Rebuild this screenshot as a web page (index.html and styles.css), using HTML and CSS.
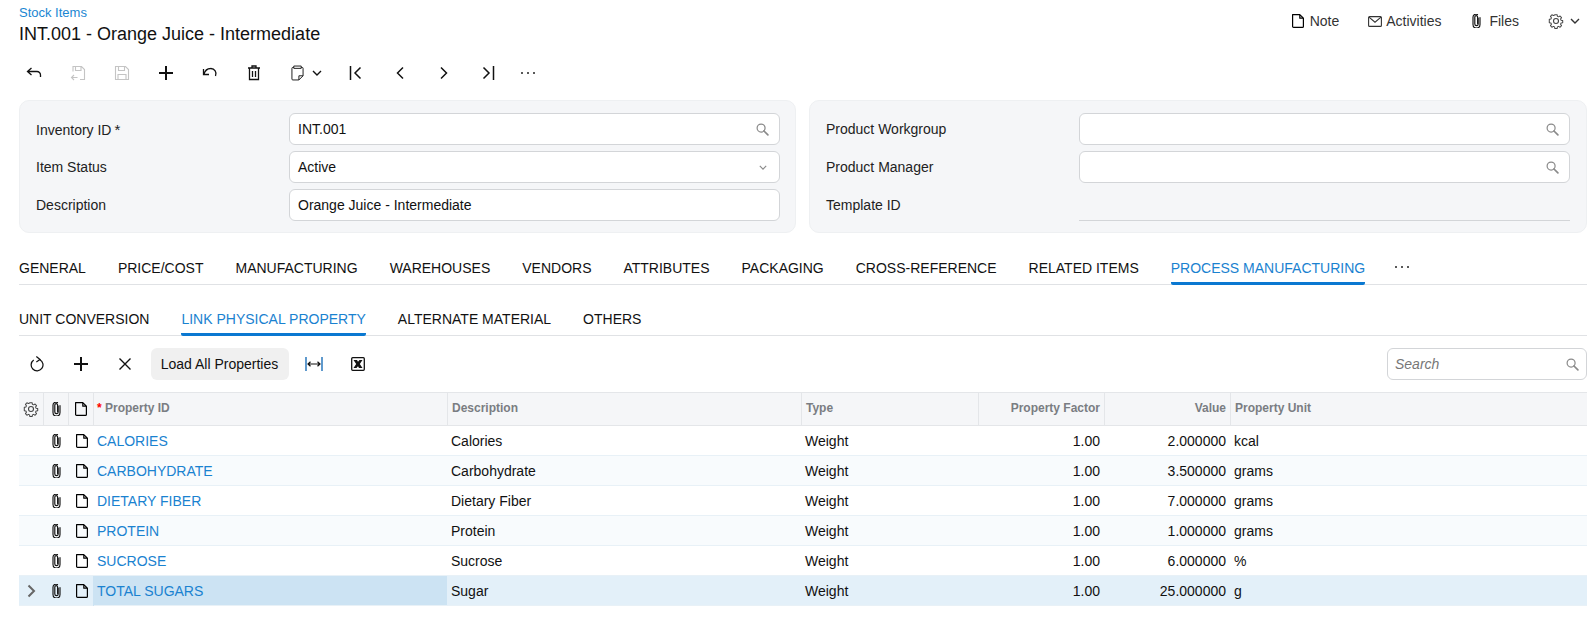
FILE: index.html
```html
<!DOCTYPE html>
<html lang="en">
<head>
    <meta charset="UTF-8">
    <meta name="viewport" content="width=device-width, initial-scale=1.0">
    <title>Stock Items</title>
    <link rel="stylesheet" href="styles.css">
</head>
<body>
    <svg class="sprite" aria-hidden="true">
        <symbol id="i-file" viewBox="0 0 12 14"><path d="M.6.6h7.2l3.6 3.6v8.2a1 1 0 0 1-1 1H1.600a1 1 0 0 1-1-1V.6zM7.800.6v3.600h3.600" fill="none" stroke="currentColor" stroke-width="1.200" stroke-linejoin="round"/></symbol>
        <symbol id="i-clip" viewBox="0 0 9 14"><path d="M6.200 4v6a1.700 1.700 0 0 1-3.400 0V3a1.400 1.400 0 0 1 2.800 0v6.500M8 3.500v7a3.500 3.500 0 0 1-7 0V3a3 3 0 0 1 4.500-2.500" fill="none" stroke="currentColor" stroke-width="1.150" stroke-linecap="round"/></symbol>
        <symbol id="i-gear" viewBox="0 0 16 16"><path d="M6.700 1h2.600l.4 2 1.300.6 1.800-1 1.700 1.900-1.100 1.700.5 1.300 2 .5v2.400l-2 .5-.5 1.300 1.100 1.700-1.700 1.900-1.800-1-1.300.6-.4 2H6.700l-.4-2-1.300-.6-1.800 1-1.700-1.900 1.100-1.700-.5-1.300-2-.5V6.500l2-.5.5-1.300-1.100-1.700 1.700-1.900 1.800 1 1.300-.6z" transform="translate(1.200 .8) scale(.85)" fill="none" stroke="currentColor" stroke-width="1.200" stroke-linejoin="round"/><circle cx="8" cy="8" r="2.500" fill="none" stroke="currentColor" stroke-width="1.100"/></symbol>
        <symbol id="i-search" viewBox="0 0 14 14"><circle cx="5.500" cy="5.500" r="4.300" fill="none" stroke="currentColor" stroke-width="1.300"/><path d="M8.600 8.600l4.200 4.200" stroke="currentColor" stroke-width="1.800" stroke-linecap="round"/></symbol>
        <symbol id="i-plus" viewBox="0 0 16 16"><path d="M8 1v14M1 8h14" stroke="currentColor" stroke-width="2"/></symbol>
        <symbol id="i-chev" viewBox="0 0 10 6"><path d="M1 1l4 4 4-4" fill="none" stroke="currentColor" stroke-width="1.400"/></symbol>
    </svg>

    <div class="page">
        <header class="top">
            <div>
                <a href="#" class="crumb">Stock Items</a>
                <h1>INT.001 - Orange Juice - Intermediate</h1>
            </div>
            <div class="top-links">
                <a href="#" class="top-link link-note"><svg class="ic-file"><use href="#i-file"/></svg>Note</a>
                <a href="#" class="top-link link-act">
                    <svg class="ic-mail" viewBox="0 0 14 11"><rect x=".6" y=".6" width="12.800" height="9.800" rx="1" fill="none" stroke="currentColor" stroke-width="1.100"/><path d="M1 1.200l6 5 6-5" fill="none" stroke="currentColor" stroke-width="1.100"/></svg>Activities</a>
                <a href="#" class="top-link link-files"><svg class="ic-clip"><use href="#i-clip"/></svg>Files</a>
                <a href="#" class="top-link link-gear"><svg class="ic-gear"><use href="#i-gear"/></svg><svg class="ic-chev"><use href="#i-chev"/></svg></a>
            </div>
        </header>

        <div class="toolbar">
            <button class="tool"><svg viewBox="0 0 16 12" class="ic16"><path d="M5.500 1L1.500 4.500l4 3.500M1.500 4.500h9.500a3.500 3.500 0 0 1 3.500 3.500v2" fill="none" stroke="currentColor" stroke-width="1.300"/></svg></button>
            <button class="tool off"><svg viewBox="0 0 16 16" class="ic16"><path d="M3 6.500V1.500h8.500l3 3v10H10M5.500 1.500v4h5.500v-4M7.500 12.500H1.500M4 10l-2.500 2.500L4 15" fill="none" stroke="currentColor" stroke-width="1.100"/></svg></button>
            <button class="tool off"><svg viewBox="0 0 16 16" class="ic16"><path d="M1.500 1.500h10l3 3v10h-13zM4.500 1.500v4h6v-4M4 14.500v-5h8v5" fill="none" stroke="currentColor" stroke-width="1.100"/></svg></button>
            <button class="tool"><svg class="ic16"><use href="#i-plus"/></svg></button>
            <button class="tool"><svg viewBox="0 0 16 14" class="ic16"><path d="M1.500 3v5.500h5.500M1.800 8.500C3 4.500 5.500 2.500 8.500 2.500a5.200 5.200 0 0 1 5 7.500" fill="none" stroke="currentColor" stroke-width="1.300"/></svg></button>
            <button class="tool"><svg viewBox="0 0 14 16" class="ic16"><path d="M1 3h12M5 3V1h4v2M2.500 3v11.500h9V3M5.500 6v6M8.500 6v6" fill="none" stroke="currentColor" stroke-width="1.300"/></svg></button>
            <button class="tool tool-copy">
                <svg viewBox="0 0 14 17" class="ic-copy"><path d="M3 2.500H2a1 1 0 0 0-1 1v11.500a1 1 0 0 0 1 1h6.500l4.500-4.500V3.500a1 1 0 0 0-1-1h-1M3 1h8v2.500H3zM8.500 16v-4.500H13" fill="none" stroke="currentColor" stroke-width="1"/></svg>
                <svg class="ic-chev"><use href="#i-chev"/></svg>
            </button>
            <button class="tool"><svg viewBox="0 0 14 14" class="ic14"><path d="M1.500 0v14M11.500 1.500L6 7l5.500 5.500" fill="none" stroke="currentColor" stroke-width="1.500"/></svg></button>
            <button class="tool"><svg viewBox="0 0 14 14" class="ic14"><path d="M10 1.500L4.500 7l5.500 5.500" fill="none" stroke="currentColor" stroke-width="1.500"/></svg></button>
            <button class="tool"><svg viewBox="0 0 14 14" class="ic14"><path d="M4 1.500L9.500 7 4 12.500" fill="none" stroke="currentColor" stroke-width="1.500"/></svg></button>
            <button class="tool"><svg viewBox="0 0 14 14" class="ic14"><path d="M12.500 0v14M2.500 1.500L8 7l-5.500 5.500" fill="none" stroke="currentColor" stroke-width="1.500"/></svg></button>
            <button class="tool tool-more"><span class="dots"><i></i><i></i><i></i></span></button>
        </div>

        <section class="cards">
            <div class="card">
                <div class="field">
                    <label>Inventory ID <span class="star">*</span></label>
                    <div class="input">INT.001<svg class="ic-search"><use href="#i-search"/></svg></div>
                </div>
                <div class="field">
                    <label>Item Status</label>
                    <div class="input">Active<svg class="ic-select"><use href="#i-chev"/></svg></div>
                </div>
                <div class="field">
                    <label>Description</label>
                    <div class="input">Orange Juice - Intermediate</div>
                </div>
            </div>
            <div class="card">
                <div class="field">
                    <label>Product Workgroup</label>
                    <div class="input"><svg class="ic-search"><use href="#i-search"/></svg></div>
                </div>
                <div class="field">
                    <label>Product Manager</label>
                    <div class="input"><svg class="ic-search"><use href="#i-search"/></svg></div>
                </div>
                <div class="field">
                    <label>Template ID</label>
                    <div class="input input-line"></div>
                </div>
            </div>
        </section>

        <nav class="tabs tabs-main">
            <a href="#" class="tab">GENERAL</a>
            <a href="#" class="tab">PRICE/COST</a>
            <a href="#" class="tab">MANUFACTURING</a>
            <a href="#" class="tab">WAREHOUSES</a>
            <a href="#" class="tab">VENDORS</a>
            <a href="#" class="tab">ATTRIBUTES</a>
            <a href="#" class="tab">PACKAGING</a>
            <a href="#" class="tab">CROSS-REFERENCE</a>
            <a href="#" class="tab">RELATED ITEMS</a>
            <a href="#" class="tab active">PROCESS MANUFACTURING</a>
            <a href="#" class="tab-more"><span class="dots"><i></i><i></i><i></i></span></a>
        </nav>

        <nav class="tabs tabs-sub">
            <a href="#" class="tab">UNIT CONVERSION</a>
            <a href="#" class="tab active">LINK PHYSICAL PROPERTY</a>
            <a href="#" class="tab">ALTERNATE MATERIAL</a>
            <a href="#" class="tab">OTHERS</a>
        </nav>

        <div class="grid-toolbar">
            <button class="tool"><svg viewBox="0 0 16 17" class="ic16"><path d="M4.500 4.300a6.300 6.300 0 1 0 6.500-.4M7.300.5l3.900 3.200-3.900 2.600" fill="none" stroke="currentColor" stroke-width="1.300"/></svg></button>
            <button class="tool"><svg class="ic16"><use href="#i-plus"/></svg></button>
            <button class="tool"><svg viewBox="0 0 14 14" class="ic14"><path d="M1.500 1.500l11 11M12.500 1.500l-11 11" stroke="currentColor" stroke-width="1.400"/></svg></button>
            <button class="btn-load">Load All Properties</button>
            <button class="tool"><svg viewBox="0 0 18 14" class="ic-fit"><path d="M1 0v14M17 0v14" stroke="#1d6fb8" stroke-width="1.400"/><path d="M3 7h12M5.500 4.800L3 7l2.500 2.200M12.500 4.800L15 7l-2.500 2.200" fill="none" stroke="#111" stroke-width="1.200"/></svg></button>
            <button class="tool"><svg viewBox="0 0 14 14" class="ic14"><rect x=".7" y=".7" width="12.600" height="12.600" rx="1" fill="none" stroke="currentColor" stroke-width="1.300"/><path d="M2.500 3h3.500l1 1.800L8.500 3h3L8.800 7l2.700 4H8l-1-1.800L5.500 11h-3l2.700-4z" fill="currentColor"/></svg></button>
            <div class="search">
                <span>Search</span>
                <svg class="ic-search"><use href="#i-search"/></svg>
            </div>
        </div>

        <table class="grid">
            <colgroup>
                <col class="c-icon"><col class="c-icon"><col class="c-icon">
                <col class="c-id"><col class="c-desc"><col class="c-type">
                <col class="c-factor"><col class="c-value"><col>
            </colgroup>
            <thead>
                <tr>
                    <th class="ico"><svg class="ic-gear"><use href="#i-gear"/></svg></th>
                    <th class="ico"><svg class="ic-clip"><use href="#i-clip"/></svg></th>
                    <th class="ico"><svg class="ic-file"><use href="#i-file"/></svg></th>
                    <th class="th-req"><span class="req">*</span> Property ID</th>
                    <th>Description</th>
                    <th>Type</th>
                    <th class="num">Property Factor</th>
                    <th class="num">Value</th>
                    <th>Property Unit</th>
                </tr>
            </thead>
            <tbody>
                <tr>
                    <td></td><td class="ico"><svg class="ic-clip"><use href="#i-clip"/></svg></td><td class="ico"><svg class="ic-file"><use href="#i-file"/></svg></td>
                    <td><a href="#">CALORIES</a></td><td>Calories</td><td>Weight</td><td class="num">1.00</td><td class="num">2.000000</td><td>kcal</td>
                </tr>
                <tr>
                    <td></td><td class="ico"><svg class="ic-clip"><use href="#i-clip"/></svg></td><td class="ico"><svg class="ic-file"><use href="#i-file"/></svg></td>
                    <td><a href="#">CARBOHYDRATE</a></td><td>Carbohydrate</td><td>Weight</td><td class="num">1.00</td><td class="num">3.500000</td><td>grams</td>
                </tr>
                <tr>
                    <td></td><td class="ico"><svg class="ic-clip"><use href="#i-clip"/></svg></td><td class="ico"><svg class="ic-file"><use href="#i-file"/></svg></td>
                    <td><a href="#">DIETARY FIBER</a></td><td>Dietary Fiber</td><td>Weight</td><td class="num">1.00</td><td class="num">7.000000</td><td>grams</td>
                </tr>
                <tr>
                    <td></td><td class="ico"><svg class="ic-clip"><use href="#i-clip"/></svg></td><td class="ico"><svg class="ic-file"><use href="#i-file"/></svg></td>
                    <td><a href="#">PROTEIN</a></td><td>Protein</td><td>Weight</td><td class="num">1.00</td><td class="num">1.000000</td><td>grams</td>
                </tr>
                <tr>
                    <td></td><td class="ico"><svg class="ic-clip"><use href="#i-clip"/></svg></td><td class="ico"><svg class="ic-file"><use href="#i-file"/></svg></td>
                    <td><a href="#">SUCROSE</a></td><td>Sucrose</td><td>Weight</td><td class="num">1.00</td><td class="num">6.000000</td><td>%</td>
                </tr>
                <tr class="selected">
                    <td class="ico"><svg viewBox="0 0 9 14" class="ic-arrow"><path d="M1.500 1.500L7 7l-5.500 5.500" fill="none" stroke="currentColor" stroke-width="2"/></svg></td><td class="ico"><svg class="ic-clip"><use href="#i-clip"/></svg></td><td class="ico"><svg class="ic-file"><use href="#i-file"/></svg></td>
                    <td class="cell-active"><a href="#">TOTAL SUGARS</a></td><td>Sugar</td><td>Weight</td><td class="num">1.00</td><td class="num">25.000000</td><td>g</td>
                </tr>
            </tbody>
        </table>
    </div>
</body>
</html>
```

FILE: styles.css
```css
* {
    box-sizing: border-box;
}
body {
    margin: 0;
    background-color: #fff;
    color: #111;
    font-family: "Liberation Sans", Arial, sans-serif;
    font-size: 14px;
}
a {
    text-decoration: none;
}
.sprite {
    display: none;
}
.page {
    padding: 0 9px 0 19px;
}

/* header */
.top {
    display: flex;
    justify-content: space-between;
    height: 55px;
    padding-top: 5px;
}
.crumb {
    display: block;
    color: #1a86d2;
    font-size: 13px;
    line-height: 15px;
}
h1 {
    margin: 3px 0 0;
    font-size: 18px;
    font-weight: normal;
    line-height: 22px;
    color: #111;
}
.top-links {
    display: flex;
    align-items: center;
    height: 32px;
}
.top-link {
    display: flex;
    align-items: center;
    color: #333;
}
.link-act {
    margin-left: 29px;
}
.link-files {
    margin-left: 31px;
}
.link-gear {
    margin-left: 29px;
    margin-right: 7px;
}
.ic-file {
    width: 12px;
    height: 14px;
    color: #000;
}
.top-link .ic-file {
    margin-right: 6px;
}
.ic-mail {
    width: 14px;
    height: 11px;
    margin-right: 4px;
}
.ic-clip {
    width: 9px;
    height: 14px;
    color: #111;
}
.top-link .ic-clip {
    margin-right: 8px;
}
.ic-gear {
    width: 16px;
    height: 16px;
    color: #444;
}
.ic-chev {
    width: 10px;
    height: 6px;
}
.link-gear .ic-chev {
    margin-left: 6px;
}

/* toolbars */
.toolbar {
    display: flex;
    align-items: center;
    height: 36px;
    margin-left: -7px;
    margin-bottom: 9px;
}
.tool {
    display: flex;
    align-items: center;
    justify-content: center;
    width: 44px;
    height: 32px;
    padding: 0;
    border: none;
    background: none;
    color: #111;
    cursor: pointer;
}
.tool.off {
    color: #c4c4c4;
}
.tool-copy {
    width: 58px;
    justify-content: flex-start;
    padding-left: 15px;
}
.tool-copy .ic-chev {
    margin-left: 8px;
}
.tool-more {
    width: 36px;
}
.ic16 {
    width: 16px;
    height: 16px;
}
.ic14 {
    width: 14px;
    height: 14px;
}
.ic-copy {
    width: 13px;
    height: 16px;
}
.ic-fit {
    width: 18px;
    height: 14px;
}
.dots {
    display: flex;
    gap: 4px;
}
.dots i {
    width: 2px;
    height: 2px;
    background-color: #222;
    border-radius: 50%;
}

/* form cards */
.cards {
    display: grid;
    grid-template-columns: 777px 1fr;
    gap: 13px;
}
.card {
    display: flex;
    flex-direction: column;
    gap: 6px;
    height: 133px;
    padding: 12px 16px 0;
    background-color: #f5f6f8;
    border: 1px solid #eef0f2;
    border-radius: 10px;
}
.card:first-child {
    padding-right: 15px;
}
.field {
    display: flex;
    align-items: center;
}
.field label {
    width: 253px;
    flex: none;
    color: #222;
}
.star {
    margin-left: -1px;
    font-size: 15px;
}
.input {
    display: flex;
    align-items: center;
    justify-content: space-between;
    flex: 1;
    height: 32px;
    padding: 0 10px 0 8px;
    background-color: #fff;
    border: 1px solid #d3d5d8;
    border-radius: 6px;
    color: #111;
}
.input-line {
    background: none;
    border: none;
    border-bottom: 1px solid #d3d5d8;
    border-radius: 0;
}
.ic-search {
    width: 13px;
    height: 13px;
    color: #8a8a8a;
    margin-left: auto;
}
.ic-select {
    width: 8px;
    height: 5px;
    margin-right: 2px;
    color: #8a8a8a;
}

/* tabs */
.tabs {
    display: flex;
    gap: 32px;
    height: 36px;
    border-bottom: 1px solid #e0e2e5;
}
.tabs-main {
    margin-top: 16px;
}
.tabs-sub {
    margin-top: 15px;
}
.tab {
    color: #111;
    line-height: 38px;
    height: 36px;
}
.tab.active {
    color: #1a82d0;
    border-bottom: 3px solid #0a78d1;
    border-radius: 2px;
}
.tab-more {
    display: flex;
    align-items: center;
    height: 36px;
    margin-left: -2px;
}

/* grid */
.grid-toolbar {
    display: flex;
    align-items: center;
    margin: 12px 0 12px -4.5px;
}
.btn-load {
    height: 32px;
    width: 138px;
    margin-left: 4px;
    margin-right: 3px;
    padding: 0;
    border: none;
    border-radius: 6px;
    background-color: #f0f0f0;
    color: #111;
    font-family: inherit;
    font-size: 14px;
}
.search {
    display: flex;
    align-items: center;
    width: 200px;
    height: 32px;
    margin-left: auto;
    padding: 0 7px;
    border: 1px solid #d3d5d8;
    border-radius: 6px;
    color: #777;
    font-style: italic;
}
.grid {
    width: 1568px;
    table-layout: fixed;
    border-collapse: separate;
    border-spacing: 0;
}
.c-icon {
    width: 25px;
}
.c-id {
    width: 354px;
}
.c-desc {
    width: 354px;
}
.c-type {
    width: 177px;
}
.c-factor {
    width: 126px;
}
.c-value {
    width: 126px;
}
.grid th {
    height: 34px;
    padding: 0 4px 3px;
    background-color: #f5f6f8;
    border-top: 1px solid #e4e6e9;
    border-bottom: 1px solid #e4e6e9;
    border-right: 1px solid #e4e6e9;
    color: #7a7d82;
    font-size: 12px;
    font-weight: bold;
    text-align: left;
}
.grid th:last-child {
    border-right: none;
}
.grid .th-req {
    padding-left: 3px;
}
.grid td {
    height: 30px;
    padding: 0 3px;
    border-bottom: 1px solid #e8f1f7;
    color: #111;
}
.grid tbody tr:nth-child(even) td {
    background-color: #f8fbfd;
}
.grid a {
    color: #1a82d0;
}
.grid td.num {
    padding-right: 5px;
    text-align: right;
}
.grid th.num {
    text-align: right;
}
.grid td.ico,
.grid th.ico {
    padding: 0;
    text-align: center;
}
.grid .ico svg {
    display: block;
    margin: 0 auto;
}
.req {
    color: #f00;
}
.grid tbody tr.selected td {
    background-color: #e3f0f9;
}
.grid tbody tr.selected td.cell-active {
    background-color: #cce3f3;
    border-right: 1px solid #e3f0f9;
    box-shadow: -1px 0 0 #cce3f3;
}
.ic-arrow {
    width: 9px;
    height: 14px;
    color: #666;
}
```
